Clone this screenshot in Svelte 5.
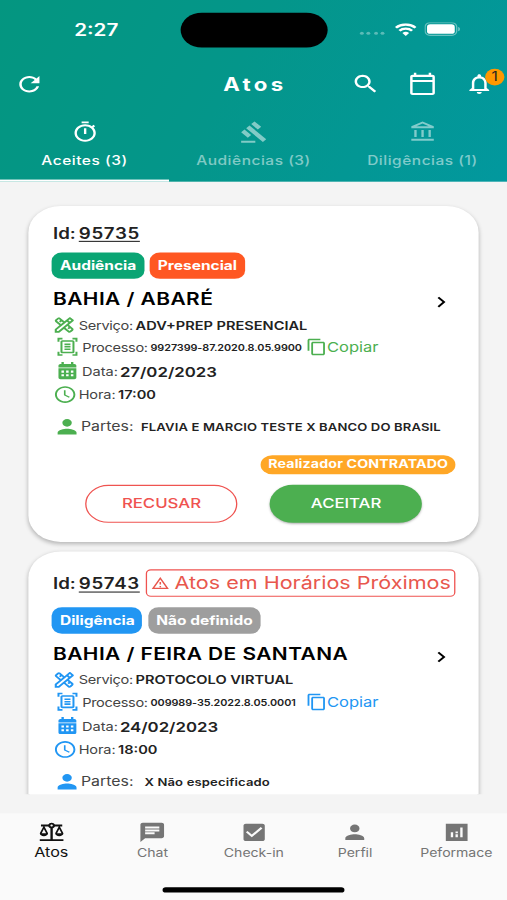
<script lang="ts">
  const icons = {
    refresh: 'M17.65 6.35C16.2 4.9 14.21 4 12 4c-4.42 0-7.99 3.58-7.99 8s3.57 8 7.99 8c3.73 0 6.84-2.55 7.73-6h-2.08c-.82 2.33-3.04 4-5.65 4-3.31 0-6-2.69-6-6s2.69-6 6-6c1.66 0 3.14.69 4.22 1.78L13 11h7V4l-2.35 2.35z',
    search: 'M15.5 14h-.79l-.28-.27C15.41 12.59 16 11.11 16 9.5 16 5.91 13.09 3 9.5 3S3 5.91 3 9.5 5.91 16 9.5 16c1.61 0 3.09-.59 4.23-1.57l.27.28v.79l5 4.99L20.49 19l-4.99-5zm-6 0C7.01 14 5 11.99 5 9.5S7.01 5 9.5 5 14 7.01 14 9.5 11.99 14 9.5 14z',
    calendar: 'M20 3h-1V1h-2v2H7V1H5v2H4c-1.1 0-2 .9-2 2v16c0 1.1.9 2 2 2h16c1.1 0 2-.9 2-2V5c0-1.1-.9-2-2-2zm0 18H4V10h16v11zm0-13H4V5h16v3z',
    bell: 'M12 22c1.1 0 2-.9 2-2h-4c0 1.1.89 2 2 2zm6-6v-5c0-3.07-1.64-5.64-4.5-6.32V4c0-.83-.67-1.5-1.5-1.5s-1.5.67-1.5 1.5v.68C7.63 5.36 6 7.92 6 11v5l-2 2v1h16v-1l-2-2zm-2 1H8v-6c0-2.48 1.51-4.5 4-4.5s4 2.02 4 4.5v6z',
    timer: 'M15 1H9v2h6V1zm-4 13h2V8h-2v6zm8.03-6.61l1.42-1.42c-.43-.51-.9-.99-1.41-1.41l-1.42 1.42C16.07 4.74 14.12 4 12 4c-4.97 0-9 4.03-9 9s4.02 9 9 9 9-4.03 9-9c0-2.12-.74-4.07-1.97-5.61zM12 20c-3.87 0-7-3.13-7-7s3.13-7 7-7 7 3.13 7 7-3.13 7-7 7z',
    gavel: 'M1 21h12v2H1zM5.245 8.07l2.83-2.827 14.14 14.142-2.828 2.828zM12.317 1l5.657 5.656-2.83 2.83-5.654-5.66zM3.825 9.485l5.657 5.657-2.828 2.828-5.657-5.657z',
    bank: 'M6.5 10h-2v7h2v-7zm6 0h-2v7h2v-7zm8.5 9H2v2h19v-2zm-2.5-9h-2v7h2v-7zm-7-6.74L16.71 6H6.29l5.21-2.74m0-2.26L2 6v2h19V6l-9.5-5z',
    service: 'M20.97 7.27c.39-.39.39-1.02 0-1.41l-2.83-2.83c-.39-.39-1.02-.39-1.41 0l-4.49 4.49-3.89-3.89c-.78-.78-2.05-.78-2.83 0l-1.9 1.9c-.78.78-.78 2.05 0 2.83l3.89 3.89L3 16.76V21h4.24l4.52-4.52 3.89 3.89c.95.95 2.23.6 2.83 0l1.9-1.9c.78-.78.78-2.05 0-2.83l-3.89-3.89 4.48-4.48zM5.04 6.94l1.89-1.9L8.2 6.31 7.02 7.5l1.41 1.41 1.19-1.19 1.2 1.2-1.9 1.9-3.88-3.88zm11.23 7.44l-1.19 1.19 1.41 1.41 1.19-1.19 1.27 1.27-1.9 1.9-3.89-3.89 1.9-1.9 1.21 1.21zM6.41 19H5v-1.41l9.61-9.61 1.3 1.3.11.11L6.41 19zm9.61-12.44l1.41-1.41 1.41 1.41-1.41 1.41-1.41-1.41z',
    scanner: 'M7 3H4v3H2V1h5v2zm15 3V1h-5v2h3v3h2zM7 21H4v-3H2v5h5v-2zm13-3v3h-3v2h5v-5h-2zM17 6H7v12h10V6zm2 12c0 1.1-.9 2-2 2H7c-1.1 0-2-.9-2-2V6c0-1.1.9-2 2-2h10c1.1 0 2 .9 2 2v12zM15 8H9v2h6V8zm0 3H9v2h6v-2zm0 3H9v2h6v-2z',
    date: 'M19 3.5h-1V1h-2.4v2.5H8.4V1H6v2.5H5c-1.1 0-2 .9-2 2v2.2h18V5.5c0-1.1-.9-2-2-2zM3 8.6V20c0 1.1.9 2 2 2h14c1.1 0 2-.9 2-2V8.6H3zm5.500 9.900H6V16h2.500v2.500zm0-4.500H6v-2.500h2.500V14zm4.700 4.500h-2.500V16h2.500v2.500zm0-4.500h-2.500v-2.500h2.500V14zm4.800 4.500h-2.500V16H18v2.500zm0-4.500h-2.500v-2.500H18V14z',
    clock: 'M11.99 2C6.47 2 2 6.48 2 12s4.47 10 9.99 10C17.52 22 22 17.52 22 12S17.52 2 11.99 2zM12 20.100c-4.500 0-8.100-3.600-8.100-8.100s3.600-8.100 8.100-8.100 8.100 3.600 8.100 8.100-3.600 8.100-8.100 8.100zm.4-13.100H10.800v6l4.900 3 .85-1.300-4.150-2.450z',
    person: 'M12 12c2.21 0 4-1.79 4-4s-1.79-4-4-4-4 1.79-4 4 1.79 4 4 4zm0 2c-2.67 0-8 1.34-8 4v2h16v-2c0-2.66-5.33-4-8-4z',
    copy: 'M16 1H4c-1.1 0-2 .9-2 2v14h2V3h12V1zm3 4H8c-1.1 0-2 .9-2 2v14c0 1.1.9 2 2 2h11c1.1 0 2-.9 2-2V7c0-1.1-.9-2-2-2zm0 16H8V7h11v14z',
    warning: 'M12 5.99L19.53 19H4.47L12 5.99M12 2L1 21h22L12 2zm1 14h-2v2h2v-2zm0-6h-2v4h2v-4z',
    chevron: 'M10 6L8.59 7.41 13.17 12l-4.58 4.59L10 18l6-6z',
    balance: 'M13 7.83c.85-.3 1.53-.98 1.83-1.83H18l-3 7c0 1.66 1.57 3 3.5 3s3.5-1.34 3.5-3l-3-7h2V4h-6.17c-.41-1.17-1.52-2-2.83-2s-2.42.83-2.83 2H3v2h2l-3 7c0 1.66 1.57 3 3.5 3S9 14.66 9 13L6 6h3.17c.3.85.98 1.53 1.83 1.83V19H2v2h20v-2h-9V7.83zM20.37 13h-3.74l1.87-4.36L20.37 13zm-13 0H3.63L5.5 8.64 7.37 13zM12 6c-.55 0-1-.45-1-1s.45-1 1-1 1 .45 1 1-.45 1-1 1z',
    chat: 'M20 2H4c-1.1 0-1.99.9-1.99 2L2 22l4-4h14c1.1 0 2-.9 2-2V4c0-1.1-.9-2-2-2zM6 9h12v2H6V9zm8 5H6v-2h8v2zm4-6H6V6h12v2z',
    check: 'M19 3H5c-1.11 0-2 .9-2 2v14c0 1.1.89 2 2 2h14c1.11 0 2-.9 2-2V5c0-1.1-.89-2-2-2zm-9 14l-5-5 1.41-1.41L10 14.17l7.59-7.59L19 8l-9 9z',
    chart: 'M2.8 3h18.4v18H2.8V3zM7 12v5h2v-5H7zm4 2v3h2v-3h-2zm0-3v2h2v-2h-2zm4-4v10h2V7h-2z',
  };

  const tabs = [
    { icon: 'timer', label: 'Aceites (3)' },
    { icon: 'gavel', label: 'Audiências (3)' },
    { icon: 'bank', label: 'Diligências (1)' },
  ];

  const acts = [
    {
      id: '95735',
      tone: 'green',
      kind: 'Audiência',
      mode: 'Presencial',
      modeTone: 'orange',
      place: 'BAHIA / ABARÉ',
      service: 'ADV+PREP PRESENCIAL',
      process: '9927399-87.2020.8.05.9900',
      date: '27/02/2023',
      time: '17:00',
      partyA: 'FLAVIA E MARCIO TESTE',
      partyB: 'BANCO DO BRASIL',
      near: false,
      hired: true,
    },
    {
      id: '95743',
      tone: 'blue',
      kind: 'Diligência',
      mode: 'Não definido',
      modeTone: 'grey',
      place: 'BAHIA / FEIRA DE SANTANA',
      service: 'PROTOCOLO VIRTUAL',
      process: '009989-35.2022.8.05.0001',
      date: '24/02/2023',
      time: '18:00',
      partyA: '',
      partyB: 'Não especificado',
      near: true,
      hired: false,
    },
  ];

  const nav = [
    { icon: 'balance', label: 'Atos' },
    { icon: 'chat', label: 'Chat' },
    { icon: 'check', label: 'Check-in' },
    { icon: 'person', label: 'Perfil' },
    { icon: 'chart', label: 'Peformace' },
  ];

  let activeTab = $state(0);
  let activeNav = $state(0);
</script>

{#snippet icon(name: string, size: number)}
  <svg class="icon" width={size} height={size} viewBox="0 0 24 24"><path d={icons[name]} /></svg>
{/snippet}

<div class="screen">
  <header>
    <div class="status">
      <span class="clock">2:27</span>
      <span class="island"></span>
      <div class="signals">
        <span class="dots"><i></i><i></i><i></i><i></i></span>
        <svg class="wifi" width="17" height="12" viewBox="0 0 17 12" fill="none" stroke="currentColor" stroke-width="2.2">
          <path d="M.9 4.3a10.8 10.8 0 0 1 15.2 0" />
          <path d="M3.6 7.1a7 7 0 0 1 9.8 0" />
          <path d="M8.5 12L5.9 9.3a3.7 3.7 0 0 1 5.2 0z" fill="currentColor" stroke="none" />
        </svg>
        <svg width="28" height="13" viewBox="0 0 28 13">
          <rect x=".5" y=".5" width="24.5" height="12" rx="3.8" fill="none" stroke="#fff" stroke-opacity=".4" />
          <rect x="2" y="2" width="21.5" height="9" rx="2.5" fill="#fff" />
          <path d="M26.2 4.5c1.7.6 1.7 3.4 0 4z" fill="#fff" fill-opacity=".5" />
        </svg>
      </div>
    </div>

    <div class="toolbar">
      <button class="tool" aria-label="Atualizar">{@render icon('refresh', 23.5)}</button>
      <h1>Atos</h1>
      <div class="actions">
        <button class="tool" aria-label="Buscar">{@render icon('search', 23)}</button>
        <button class="tool" aria-label="Agenda">{@render icon('calendar', 23)}</button>
        <button class="tool" aria-label="Notificações">
          {@render icon('bell', 23)}
          <span class="count">1</span>
        </button>
      </div>
    </div>

    <nav class="tabs">
      {#each tabs as tab, i}
        <button class="tab" class:active={activeTab === i} onclick={() => activeTab = i}>
          {@render icon(tab.icon, 22)}
          <span>{tab.label}</span>
        </button>
      {/each}
    </nav>
  </header>

  <main>
    {#each acts as act}
      <article class="card {act.tone}">
        <div class="id-row" class:tall={act.near}>
          <span>Id:</span>
          <span class="number">{act.id}</span>
          {#if act.near}
            <span class="alert">{@render icon('warning', 14.5)}<span>Atos em Horários Próximos</span></span>
          {/if}
        </div>
        <div class="badges">
          <span class="badge kind">{act.kind}</span>
          <span class="badge {act.modeTone}">{act.mode}</span>
        </div>
        <div class="place">
          <h2>{act.place}</h2>
          <span class="go">{@render icon('chevron', 20)}</span>
        </div>
        <div class="row service">
          {@render icon('service', 19.5)}<span class="label">Serviço:</span><b>{act.service}</b>
        </div>
        <div class="row process">
          {@render icon('scanner', 18.6)}<span class="label">Processo:</span><b>{act.process}</b>
          <button class="copy">{@render icon('copy', 17)}<span>Copiar</span></button>
        </div>
        <div class="row date">
          {@render icon('date', 18.5)}<span class="label">Data:</span><b>{act.date}</b>
        </div>
        <div class="row time">
          {@render icon('clock', 19)}<span class="label">Hora:</span><b>{act.time}</b>
        </div>
        <div class="row parties">
          {@render icon('person', 22)}<span class="label">Partes:</span><b>{act.partyA} X {act.partyB}</b>
        </div>
        {#if act.hired}
          <div class="hired"><span>Realizador CONTRATADO</span></div>
          <div class="buttons">
            <button class="refuse">RECUSAR</button>
            <button class="accept">ACEITAR</button>
          </div>
        {/if}
      </article>
    {/each}
  </main>

  <footer>
    <nav class="bottom">
      {#each nav as item, i}
        <button class="nav-item" class:active={activeNav === i} onclick={() => activeNav = i}>
          {@render icon(item.icon, 22)}
          <span>{item.label}</span>
        </button>
      {/each}
    </nav>
    <div class="home"></div>
  </footer>
</div>

<style>
  :global(body) {
    width: 507px;
    height: 900px;
    overflow: hidden;
  }

  /* 393x852 layout stretched over the whole window */
  .screen {
    width: 393px;
    height: 852px;
    transform: scale(1.2901, 1.0563);
    transform-origin: 0 0;
    display: flex;
    flex-direction: column;
    overflow: hidden;
    background: #f4f4f4;
    color: #222;
    font-family: Inter, "Liberation Sans", sans-serif;
  }

  button {
    border: 0;
    padding: 0;
    background: none;
    color: inherit;
    font-family: inherit;
  }

  span, b, h1, h2 {
    white-space: nowrap;
  }

  .icon {
    display: block;
    flex: none;
    fill: currentColor;
  }

  header {
    flex: none;
    height: 171.5px;
    display: flex;
    flex-direction: column;
    color: #fff;
    background: linear-gradient(115deg, #049680 0%, #04968a 45%, #02989e 100%);
  }

  .status {
    height: 59px;
    display: grid;
    grid-template-columns: 139.5px 114.5px 1fr;
    box-sizing: border-box;
    padding-top: 11.5px;
  }

  .clock {
    padding-left: 57.5px;
    font-size: 16px;
    font-weight: 600;
    line-height: 32px;
  }

  .island {
    height: 33px;
    border-radius: 17px;
    background: #000;
  }

  .signals {
    display: flex;
    align-items: center;
    height: 32px;
    padding-left: 25px;
  }

  .dots {
    display: flex;
    gap: 2.3px;
    margin-top: 8px;
    opacity: 0.35;
  }

  .dots i {
    width: 3px;
    height: 3px;
    border-radius: 50%;
    background: #fff;
  }

  .wifi {
    margin: 0 6.7px 0 7.7px;
  }

  .toolbar {
    height: 41px;
    display: grid;
    grid-template-columns: 1fr auto 1fr;
    align-items: center;
    padding: 0 10px 0 11px;
  }

  .tool {
    position: relative;
    width: 24px;
    height: 24px;
    display: grid;
    place-items: center;
  }

  h1 {
    margin: 0 0 0.5px 1px;
    font-size: 17.2px;
    font-weight: 700;
    letter-spacing: 2.6px;
  }

  .actions {
    display: flex;
    justify-content: flex-end;
    gap: 20px;
  }

  .count {
    position: absolute;
    left: 17px;
    top: -2.2px;
    width: 15px;
    height: 16px;
    border-radius: 50%;
    background: #ff9800;
    color: #222;
    font-size: 12px;
    line-height: 16px;
    text-align: center;
  }

  .tabs {
    flex: 1;
    display: grid;
    grid-template-columns: repeat(3, 1fr);
  }

  .tab {
    display: flex;
    flex-direction: column;
    align-items: center;
    gap: 6.5px;
    padding-top: 14px;
    border-bottom: 2px solid transparent;
    color: rgba(255, 255, 255, 0.5);
    font-size: 12px;
    font-weight: 500;
    letter-spacing: 0.4px;
    line-height: 18px;
  }

  .tab.active {
    color: #fff;
    border-color: #fff;
  }

  main {
    flex: none;
    height: 580.5px;
    margin-bottom: 18px;
    box-sizing: border-box;
    padding: 23.5px 22px 0 22.2px;
    overflow: hidden;
  }

  .card {
    --tone: #4caf50;
    --kind: #0aa574;
    display: flex;
    flex-direction: column;
    box-sizing: border-box;
    min-height: 318px;
    padding: 16px 18.6px 18px 18.9px;
    margin-bottom: 8.5px;
    border-radius: 25px;
    background: #fff;
    box-shadow: 0 2px 4px rgba(0, 0, 0, 0.26);
  }

  .card.blue {
    --tone: #2196f3;
    --kind: #2196f3;
  }

  .id-row {
    display: flex;
    align-items: center;
    height: 19.5px;
    font-size: 14.5px;
    font-weight: 600;
  }

  .id-row.tall {
    height: 29px;
  }

  .number {
    margin-left: 2.3px;
    letter-spacing: 0.5px;
    text-decoration: underline;
    text-underline-offset: 2px;
  }

  .alert {
    display: flex;
    align-items: center;
    gap: 4.2px;
    box-sizing: border-box;
    height: 26.5px;
    margin-left: 4.8px;
    padding: 0 2.5px;
    border: 1px solid #ef5350;
    border-radius: 4px;
    color: #e8574d;
    font-size: 16.7px;
    font-weight: 400;
  }

  .badges {
    display: flex;
    gap: 4.7px;
    margin: 8px 0 6px -0.6px;
  }

  .badge {
    height: 25.5px;
    padding: 0 6px;
    border-radius: 8px;
    color: #fff;
    font-size: 12px;
    font-weight: 700;
    line-height: 25px;
  }

  .badges .kind {
    background: var(--kind);
  }

  .orange {
    background: #ff5722;
  }

  .grey {
    background: #9e9e9e;
  }

  .place {
    display: flex;
    align-items: center;
    justify-content: space-between;
    height: 26px;
    margin-bottom: 1px;
    color: #000;
  }

  h2 {
    margin: 0;
    font-size: 16.2px;
    font-weight: 600;
    letter-spacing: 0.35px;
  }

  .go {
    margin: 5px 0 0;
  }

  .row {
    display: flex;
    align-items: center;
    height: 21px;
    font-size: 11.3px;
  }

  .row > .icon {
    color: var(--tone);
  }

  .row b {
    font-weight: 600;
  }

  .label {
    margin: 0 2.2px 0 2px;
    color: #444;
  }

  .service > .icon {
    margin-left: -1px;
  }

  .service .label,
  .process .label {
    letter-spacing: -0.25px;
    margin-left: 1.5px;
  }

  .service b {
    font-size: 11.3px;
  }

  .process {
    padding-left: 2px;
  }

  .process .label {
    margin-left: 2px;
  }

  .process b {
    width: 118.5px;
    font-size: 8.4px;
    letter-spacing: -0.05px;
  }

  .copy {
    display: flex;
    align-items: center;
    margin-left: 2px;
    color: var(--tone);
    font-size: 12.8px;
  }

  .copy span {
    margin-left: -0.7px;
  }

  .date {
    height: 24px;
    padding: 1px 0 0 2px;
    box-sizing: border-box;
  }

  .date .label {
    margin: 0 1.5px 0 2px;
  }

  .date b {
    font-size: 13px;
  }

  .time > .icon {
    margin-left: -0.5px;
  }

  .time .label {
    margin: 0 2px 0 1.4px;
    letter-spacing: -0.1px;
  }

  .parties {
    margin-top: 9px;
    font-size: 12.3px;
  }

  .parties > .icon {
    margin-left: -0.5px;
  }

  .parties .label {
    margin-left: 0.2px;
  }

  .parties b {
    margin-left: 3.7px;
    font-size: 10.1px;
    letter-spacing: 0.12px;
    white-space: pre;
  }

  .hired {
    display: flex;
    justify-content: flex-end;
    margin: 17px -0.5px 0 0;
  }

  .hired span {
    height: 17.5px;
    padding: 0 5.5px;
    border-radius: 9px;
    background: #ffa726;
    color: #fff;
    font-size: 11px;
    font-weight: 700;
    letter-spacing: 0.1px;
    line-height: 17.5px;
  }

  .buttons {
    display: flex;
    justify-content: space-evenly;
    margin-top: 10px;
  }

  .buttons button {
    box-sizing: border-box;
    width: 118px;
    height: 36px;
    padding-bottom: 1px;
    border-radius: 18px;
    font-size: 13px;
    font-weight: 500;
  }

  .buttons .refuse {
    border: 1px solid #ef5350;
    color: #ef5350;
  }

  .buttons .accept {
    background: #4caf50;
    color: #fff;
    box-shadow: 0 1px 2px rgba(0, 0, 0, 0.3);
  }

  footer {
    flex: 1;
    background: #fafafa;
  }

  .bottom {
    display: grid;
    grid-template-columns: repeat(5, 1fr);
    height: 70px;
    margin-left: 0.5px;
  }

  .nav-item {
    display: flex;
    flex-direction: column;
    align-items: center;
    gap: 0.5px;
    padding-top: 6.5px;
    color: #757575;
    font-size: 10.9px;
    line-height: 16px;
  }

  .nav-item.active {
    color: #111;
    font-size: 12.5px;
  }

  .home {
    width: 141px;
    height: 5px;
    margin: 0 auto;
    border-radius: 3px;
    background: #000;
  }
</style>
